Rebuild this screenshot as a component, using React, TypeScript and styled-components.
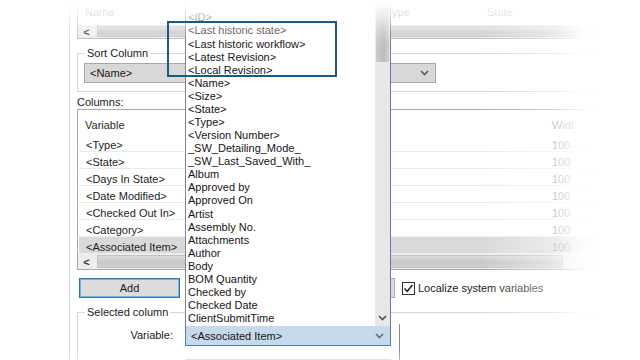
import React from 'react';
import styled, { createGlobalStyle } from 'styled-components';

const GlobalStyle = createGlobalStyle`
  html, body {
    margin: 0;
    padding: 0;
    background: #fff;
  }
  body {
    font-family: "Liberation Sans", Arial, sans-serif;
    font-size: 11px;
    color: #1c1c1c;
  }
`;

const Stage = styled.div`
  position: relative;
  width: 640px;
  height: 360px;
  overflow: hidden;
  background: #fff;
`;

const Dialog = styled.div`
  margin-left: 69px;
  width: 571px;
  height: 360px;
  box-sizing: border-box;
  border-left: 1px solid #d6d6d6;
  padding-left: 7px;
  display: flex;
  flex-direction: column;
`;

/* top list, only its tail is in view */
const TopList = styled.div`
  height: 40px;
  border: 1px solid #b9b9b9;
  border-top: none;
  display: flex;
  flex-direction: column;
`;

const TopHeader = styled.div`
  height: 25px;
  display: grid;
  grid-template-columns: 301px 101px 1fr;
  color: #8a8a8a;
  line-height: 13px;
  padding-top: 6px;
  box-sizing: border-box;

  span {
    padding-left: 7px;
  }
`;

const HScroll = styled.div<{ $height: number }>`
  height: ${(p) => p.$height}px;
  display: flex;
  align-items: stretch;
  background: #ededed;
`;

const ScrollArrow = styled.div`
  width: 17px;
  display: flex;
  align-items: center;
  justify-content: center;
  color: #3a3a3a;
  font-size: 11px;
  font-weight: bold;
`;

const ScrollThumb = styled.div`
  flex: 1;
  margin: 1px 60px 1px 2px;
  background: linear-gradient(to bottom, #dcdcdc, #c6c6c6 60%, #d2d2d2);
  border: 1px solid #c2c2c2;
`;

const Group = styled.div<{ $top: number }>`
  margin-top: ${(p) => p.$top}px;
  padding: 0 6px 8px 6px;
  border: 1px solid #d8d8d8;
  display: flex;
  flex-direction: column;
  align-items: flex-start;
`;

const GroupTitle = styled.div`
  margin: -7px 0 0 1px;
  padding: 0 2px;
  line-height: 13px;
  background: #fff;
  color: #222;
`;

const Combo = styled.div<{ $width: number; $tone?: 'gray' | 'blue' }>`
  position: relative;
  width: ${(p) => p.$width}px;
  height: 21px;
  box-sizing: border-box;
  display: flex;
  align-items: center;
  justify-content: space-between;
  padding: 0 6px 0 5px;
  background: ${(p) => (p.$tone === 'blue' ? '#c7d9ec' : '#d8d8d8')};
  border: 1px solid ${(p) => (p.$tone === 'blue' ? '#4e7ca6' : '#a8a8a8')};
  color: #161616;
`;

const SortCombo = styled(Combo)`
  margin-top: 3px;
  height: 20px;
`;

const Chevron = ({ color = '#5a5a5a' }: { color?: string }) => (
  <svg width="9" height="6" viewBox="0 0 9 6">
    <polyline points="1,1 4.5,4.5 8,1" fill="none" stroke={color} strokeWidth="1.6" />
  </svg>
);

const Label = styled.div`
  margin-top: 4px;
  line-height: 13px;
  color: #222;
`;

const ListView = styled.div`
  width: 545px;
  height: 163px;
  border: 1px solid #a9a9a9;
  display: flex;
  flex-direction: column;
`;

const ListHeader = styled.div`
  height: 25px;
  display: flex;
  align-items: center;
  padding-top: 4px;
  box-sizing: border-box;
  color: #2a2a2a;
`;

const Cell = styled.span`
  flex: 1;
  padding-left: 7px;
`;

const WidthCell = styled.span`
  width: 71px;
  padding-left: 4px;
  color: #8e8e8e;
`;

const Row = styled.div<{ $selected?: boolean }>`
  height: 17px;
  box-sizing: border-box;
  display: flex;
  align-items: center;
  padding-top: 4px;
  border-bottom: 1px solid #ececec;
  background: ${(p) => (p.$selected ? '#d9d9d9' : 'transparent')};
  margin-left: 1px;
`;

const ButtonRow = styled.div`
  margin-top: 8px;
  display: flex;
  align-items: center;
  height: 20px;
`;

const Button = styled.div<{ $focused?: boolean; $width: number; $left: number }>`
  width: ${(p) => p.$width}px;
  margin-left: ${(p) => p.$left}px;
  height: 20px;
  box-sizing: border-box;
  display: flex;
  align-items: center;
  justify-content: center;
  background: #dcdcdc;
  border: 1px solid ${(p) => (p.$focused ? '#2f77b0' : '#adadad')};
  box-shadow: ${(p) => (p.$focused ? 'inset 0 0 0 1px #7fb0d8' : 'none')};
  color: #1a1a1a;
`;

const Check = styled.label`
  margin-left: 7px;
  display: flex;
  align-items: center;
  gap: 3px;
  color: #1a1a1a;
`;

const Box = styled.span`
  width: 13px;
  height: 13px;
  box-sizing: border-box;
  border: 1px solid #333;
  background: #fff;
  display: flex;
  align-items: center;
  justify-content: center;
`;

const FormArea = styled.div`
  display: flex;
  margin-top: 2px;
`;

const FormGrid = styled.div`
  display: grid;
  grid-template-columns: 89px 206px;
  column-gap: 12px;
  row-gap: 4px;
  align-items: center;
`;

const FormLabel = styled.div`
  text-align: right;
  color: #222;
  line-height: 13px;
`;

const TextBox = styled.div`
  height: 21px;
  box-sizing: border-box;
  border: 1px solid #cfcfcf;
  background: #f4f4f4;
  color: #a0a0a0;
  padding: 3px 0 0 5px;
  margin-left: 1px;
`;

const SidePane = styled.div`
  margin-left: 8px;
  margin-top: 3px;
  width: 150px;
  height: 60px;
  border-left: 1px solid #8a8a8a;
`;

/* the open drop-down list of the Variable combo */
const Popup = styled.div`
  position: absolute;
  left: -1px;
  bottom: 100%;
  width: 206px;
  height: 345px;
  box-sizing: border-box;
  background: #fff;
  border: 1px solid #7b8894;
  border-right-color: #5f7d99;
  border-bottom: none;
  display: flex;
  z-index: 2;
`;

const Items = styled.div`
  flex: 1;
  display: flex;
  flex-direction: column;
  justify-content: flex-end;
  padding: 0 0 1px 2px;
`;

const Item = styled.div<{ $muted?: boolean }>`
  height: 13.08px;
  line-height: 13px;
  white-space: nowrap;
  color: ${(p) => (p.$muted ? '#333' : '#151515')};
`;

const VScroll = styled.div`
  width: 15px;
  background: #e8e8e8;
  display: flex;
  flex-direction: column;
  align-items: stretch;
`;

const VThumb = styled.div`
  margin: 25px 1px 0 1px;
  height: 55px;
  background: linear-gradient(to right, #cdcdcd, #bdbdbd 60%, #cfcfcf);
`;

const VArrow = styled.div`
  margin-top: auto;
  height: 17px;
  display: flex;
  align-items: center;
  justify-content: center;
`;

const Highlight = styled.div`
  position: absolute;
  left: 167px;
  top: 21px;
  width: 170px;
  height: 56px;
  box-sizing: border-box;
  border: 2px solid #1d5a7c;
  z-index: 4;
  pointer-events: none;
`;

const Vignette = styled.div`
  position: absolute;
  inset: 0;
  z-index: 3;
  pointer-events: none;
  background:
    linear-gradient(to bottom, rgba(255,255,255,1) 0px, rgba(255,255,255,0.75) 14px, rgba(255,255,255,0.28) 30px, rgba(255,255,255,0.03) 42px, rgba(255,255,255,0) 48px),
    linear-gradient(to right, rgba(255,255,255,0) 480px, rgba(255,255,255,0.45) 550px, rgba(255,255,255,0.9) 580px, rgba(255,255,255,1) 596px),
    linear-gradient(to top, rgba(255,255,255,0.4) 0px, rgba(255,255,255,0) 12px);
`;

const variables = [
  '<ID>',
  '<Last historic state>',
  '<Last historic workflow>',
  '<Latest Revision>',
  '<Local Revision>',
  '<Name>',
  '<Size>',
  '<State>',
  '<Type>',
  '<Version Number>',
  '_SW_Detailing_Mode_',
  '_SW_Last_Saved_With_',
  'Album',
  'Approved by',
  'Approved On',
  'Artist',
  'Assembly No.',
  'Attachments',
  'Author',
  'Body',
  'BOM Quantity',
  'Checked by',
  'Checked Date',
  'ClientSubmitTime',
];

const columns = [
  '<Type>',
  '<State>',
  '<Days In State>',
  '<Date Modified>',
  '<Checked Out In>',
  '<Category>',
  '<Associated Item>',
];

export default function App() {
  return (
    <Stage>
      <GlobalStyle />
      <Dialog>
        <TopList>
          <TopHeader>
            <span>Name</span>
            <span>Type</span>
            <span>State</span>
          </TopHeader>
          <HScroll $height={13}>
            <ScrollArrow>&lt;</ScrollArrow>
            <ScrollThumb />
          </HScroll>
        </TopList>

        <Group $top={14}>
          <GroupTitle>Sort Column</GroupTitle>
          <SortCombo $width={352}>
            <span>&lt;Name&gt;</span>
            <Chevron />
          </SortCombo>
        </Group>

        <Label>Columns:</Label>
        <ListView>
          <ListHeader>
            <Cell>Variable</Cell>
            <WidthCell>Widt</WidthCell>
          </ListHeader>
          {columns.map((c, i) => (
            <Row key={c} $selected={i === columns.length - 1}>
              <Cell>{c}</Cell>
              <WidthCell>100</WidthCell>
            </Row>
          ))}
          <HScroll $height={15}>
            <ScrollArrow>&lt;</ScrollArrow>
            <ScrollThumb />
          </HScroll>
        </ListView>

        <ButtonRow>
          <Button $focused $width={101} $left={2}>
            Add
          </Button>
          <Button $width={205} $left={10}>
            Remove
          </Button>
          <Check>
            <Box>
              <svg width="11" height="11" viewBox="0 0 11 11">
                <polyline points="1.5,5.5 4.2,8.3 9.5,2" fill="none" stroke="#222" strokeWidth="1.5" />
              </svg>
            </Box>
            Localize system variables
          </Check>
        </ButtonRow>

        <Group $top={14}>
          <GroupTitle>Selected column</GroupTitle>
          <FormArea>
            <FormGrid>
              <FormLabel>Variable:</FormLabel>
              <Combo $width={206} $tone="blue">
                <span>&lt;Associated Item&gt;</span>
                <Chevron color="#5b6f82" />
                <Popup>
                  <Items>
                    {variables.map((v, i) => (
                      <Item key={v} $muted={i === 1}>
                        {v}
                      </Item>
                    ))}
                  </Items>
                  <VScroll>
                    <VThumb />
                    <VArrow>
                      <Chevron color="#505050" />
                    </VArrow>
                  </VScroll>
                </Popup>
              </Combo>
              <FormLabel>Column Name:</FormLabel>
              <TextBox>Associated Item</TextBox>
            </FormGrid>
            <SidePane />
          </FormArea>
        </Group>
      </Dialog>
      <Vignette />
      <Highlight />
    </Stage>
  );
}
